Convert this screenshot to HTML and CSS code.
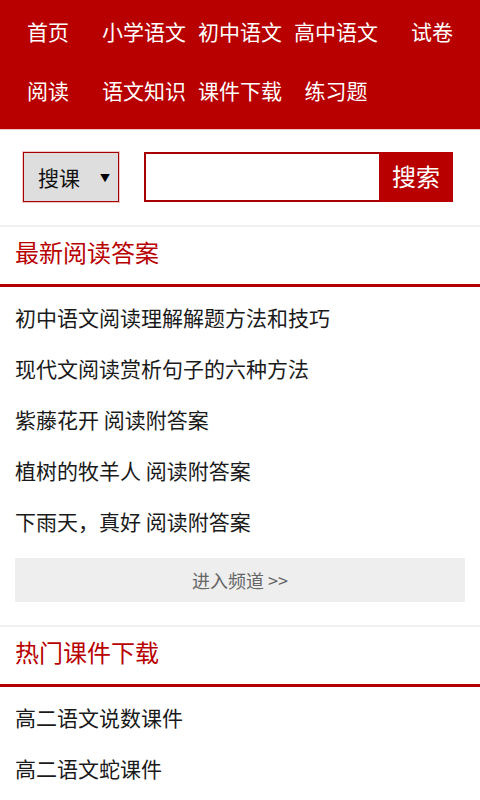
FILE: index.html
```html
<!DOCTYPE html>
<html lang="zh-CN">
<head>
<meta charset="utf-8">
<title>语文</title>
<link rel="stylesheet" href="styles.css">
</head>
<body>
<header class="nav">
  <a class="nav-item">首页</a>
  <a class="nav-item">小学语文</a>
  <a class="nav-item">初中语文</a>
  <a class="nav-item">高中语文</a>
  <a class="nav-item">试卷</a>
  <a class="nav-item">阅读</a>
  <a class="nav-item">语文知识</a>
  <a class="nav-item">课件下载</a>
  <a class="nav-item">练习题</a>
</header>

<div class="search">
  <div class="select">
    <span class="select-text">搜课</span>
    <span class="select-arrow">▼</span>
  </div>
  <div class="search-box">
    <div class="search-input"></div>
    <div class="search-btn">搜索</div>
  </div>
</div>

<section class="block">
  <h2 class="block-title">最新阅读答案</h2>
  <ul class="list">
    <li>初中语文阅读理解解题方法和技巧</li>
    <li>现代文阅读赏析句子的六种方法</li>
    <li>紫藤花开 阅读附答案</li>
    <li>植树的牧羊人 阅读附答案</li>
    <li>下雨天，真好 阅读附答案</li>
  </ul>
  <div class="more">进入频道 &gt;&gt;</div>
</section>

<section class="block">
  <h2 class="block-title">热门课件下载</h2>
  <ul class="list">
    <li>高二语文说数课件</li>
    <li>高二语文蛇课件</li>
  </ul>
</section>
</body>
</html>
```

FILE: styles.css
```css
html, body {
  margin: 0;
  padding: 0;
  background: #fff;
}
body {
  font-family: "Noto Sans CJK SC", "Noto Sans", sans-serif;
  color: #1a1a1a;
  overflow: hidden;
}
.nav {
  background: #b90000;
  display: grid;
  grid-template-columns: repeat(5, 96px);
  grid-auto-rows: 59px;
  padding: 2px 0 9px;
  border-bottom: 1px solid #f3c4c4;
}
.nav-item {
  color: #fff;
  font-size: 21px;
  display: flex;
  align-items: center;
  justify-content: center;
  line-height: 1;
}
.search {
  display: flex;
  align-items: center;
  padding: 22px 0 23px 23px;
  gap: 25px;
  border-bottom: 2px solid #f1f1f1;
}
.select {
  width: 94px;
  height: 48px;
  background: #dedede;
  border: 1px solid #a80000;
  box-shadow: 0 0 0 1px #f0c8c8;
  display: flex;
  align-items: center;
}
.select-text {
  font-size: 21px;
  line-height: 1;
  width: 44px;
  margin-left: 14px;
  white-space: nowrap;
  color: #111;
}
.select-arrow {
  font-size: 10px;
  margin-left: 18px;
  color: #000;
}
.search-box {
  display: flex;
  height: 50px;
}
.search-input {
  width: 233px;
  height: 46px;
  border: 2px solid #a80000;
  border-right: none;
  background: #fff;
}
.search-btn {
  width: 74px;
  height: 50px;
  background: #b90000;
  color: #fff;
  font-size: 24px;
  display: flex;
  align-items: center;
  justify-content: center;
  line-height: 1;
  padding-bottom: 2px;
  box-sizing: border-box;
}
.block {
  border-bottom: 2px solid #f1f1f1;
}
.block:last-child {
  border-bottom: none;
}
.block-title {
  margin: 0;
  height: 60px;
  box-sizing: border-box;
  display: flex;
  align-items: center;
  padding: 0 0 8px 15px;
  font-size: 24px;
  font-weight: normal;
  color: #b80000;
  border-bottom: 3px solid #b30000;
}
.list {
  list-style: none;
  margin: 0;
  padding: 5px 0 0;
}
.list li {
  height: 51px;
  display: flex;
  align-items: center;
  padding-left: 15px;
  font-size: 21px;
  line-height: 1;
}
.more {
  margin: 11px 15px 23px;
  height: 44px;
  background: #eeeeee;
  color: #666;
  font-size: 18px;
  display: flex;
  align-items: center;
  justify-content: center;
}
```
